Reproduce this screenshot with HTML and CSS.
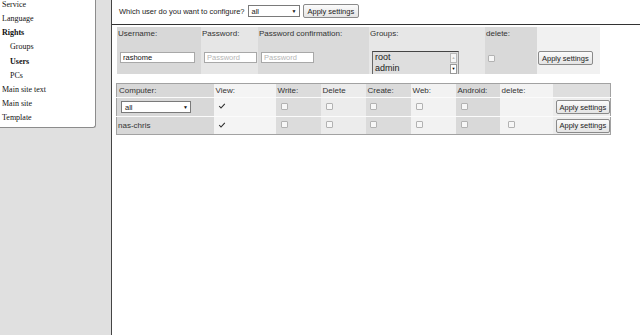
FILE: index.html
```html
<!DOCTYPE html>
<html lang="en">
<head>
    <meta charset="UTF-8">
    <title>Rights - Users</title>
    <link rel="stylesheet" href="styles.css">
</head>
<body>
    <div class="sidebar">
        <ul class="menu">
            <li>Service</li>
            <li>Language</li>
            <li class="bold">Rights</li>
            <li class="sub">Groups</li>
            <li class="sub bold">Users</li>
            <li class="sub">PCs</li>
            <li>Main site text</li>
            <li>Main site</li>
            <li>Template</li>
        </ul>
    </div>
    <div class="main">
        <div class="topbar">
            <span class="question">Which user do you want to configure?</span>
            <div class="select user-select"><span>all</span><span class="arrow">▼</span></div>
            <button>Apply settings</button>
        </div>

        <table class="user-table">
            <tr class="head">
                <td class="c1">Username:</td>
                <td class="c2">Password:</td>
                <td class="c3">Password confirmation:</td>
                <td class="c4">Groups:</td>
                <td class="c5">delete:</td>
                <td class="c6"></td>
            </tr>
            <tr>
                <td class="c1"><input class="field" type="text" value="rashome"></td>
                <td class="c2"><input class="field short" type="text" placeholder="Password"></td>
                <td class="c3"><input class="field short" type="text" placeholder="Password"></td>
                <td class="c4">
                    <div class="listbox">
                        <div class="options">
                            <div>root</div>
                            <div>admin</div>
                        </div>
                        <div class="scroll">
                            <span class="up">▲</span>
                            <span class="down">▼</span>
                        </div>
                    </div>
                </td>
                <td class="c5"><span class="cb"></span></td>
                <td class="c6"><button>Apply settings</button></td>
            </tr>
        </table>

        <table class="pc-table">
            <tr class="head">
                <td class="p1">Computer:</td>
                <td class="p2">View:</td>
                <td class="p3">Write:</td>
                <td class="p4">Delete</td>
                <td class="p5">Create:</td>
                <td class="p6">Web:</td>
                <td class="p7">Android:</td>
                <td class="p8">delete:</td>
                <td class="p9"></td>
            </tr>
            <tr class="row">
                <td class="p1"><div class="select pc-select"><span>all</span><span class="arrow">▼</span></div></td>
                <td class="p2"><span class="cb on"><svg width="8" height="8" viewBox="0 0 8 8"><path d="M1.2 4 L3 6 L6.8 1.8" fill="none" stroke="#2a2a2a" stroke-width="1.1"/></svg></span></td>
                <td class="p3"><span class="cb"></span></td>
                <td class="p4"><span class="cb"></span></td>
                <td class="p5"><span class="cb"></span></td>
                <td class="p6"><span class="cb"></span></td>
                <td class="p7"><span class="cb"></span></td>
                <td class="p8"></td>
                <td class="p9"><button>Apply settings</button></td>
            </tr>
            <tr class="row">
                <td class="p1">nas-chris</td>
                <td class="p2"><span class="cb on"><svg width="8" height="8" viewBox="0 0 8 8"><path d="M1.2 4 L3 6 L6.8 1.8" fill="none" stroke="#2a2a2a" stroke-width="1.1"/></svg></span></td>
                <td class="p3"><span class="cb"></span></td>
                <td class="p4"><span class="cb"></span></td>
                <td class="p5"><span class="cb"></span></td>
                <td class="p6"><span class="cb"></span></td>
                <td class="p7"><span class="cb"></span></td>
                <td class="p8"><span class="cb del"></span></td>
                <td class="p9"><button>Apply settings</button></td>
            </tr>
        </table>
    </div>
</body>
</html>
```

FILE: styles.css
```css
body {
    margin: 0;
    display: flex;
    height: 100vh;
    overflow: hidden;
    font-family: "Liberation Sans", Arial, sans-serif;
    font-size: 8px;
    color: #333;
    background: #fff;
}

/* left menu */
.sidebar {
    width: 111px;
    flex-shrink: 0;
    background: #e0e0e0;
    border-right: 1px solid #444;
}

.menu {
    list-style: none;
    margin: -2px 0 0 0;
    padding: 0 0 2px 0;
    width: 95px;
    background: #fff;
    border-right: 1px solid #8c8c8c;
    border-bottom: 1px solid #8c8c8c;
    border-bottom-right-radius: 3px;
    font-family: "Liberation Serif", "Times New Roman", serif;
    font-size: 8px;
    color: #111;
}

.menu li {
    line-height: 14.15px;
    padding-left: 2px;
}

.menu li.sub {
    padding-left: 10px;
}

.menu li.bold {
    font-weight: bold;
}

/* main area */
.main {
    flex: 1;
}

.topbar {
    height: 20px;
    padding: 4px 0 0 7px;
    border-bottom: 1px solid #333;
    display: flex;
    align-items: flex-start;
}

.question {
    margin-top: 3px;
    font-size: 7.5px;
    color: #222;
}

button {
    height: 14px;
    padding: 0 3px;
    font-family: "Liberation Sans", Arial, sans-serif;
    font-size: 7.5px;
    color: #222;
    border: 1px solid #8a8a8a;
    border-radius: 2px;
    background: linear-gradient(to bottom, #fbfbfb, #e4e4e4);
    white-space: nowrap;
}

.topbar button {
    margin-left: 3px;
    padding: 0 4px;
}

.select {
    display: flex;
    align-items: center;
    justify-content: space-between;
    height: 10px;
    padding: 0 2px 0 3px;
    border: 1px solid #7a7a7a;
    background: #fff;
    font-size: 7.5px;
    color: #222;
}

.select .arrow {
    font-size: 5px;
    color: #111;
}

.user-select {
    width: 45px;
    margin: 1px 0 0 3px;
}

.pc-select {
    width: 63px;
}

/* user table */
table {
    border-collapse: collapse;
}

td {
    box-sizing: border-box;
    padding: 0;
    vertical-align: top;
}

.user-table {
    margin: 2px 0 0 5px;
}

.user-table td {
    height: 23px;
}

.user-table .head td {
    padding: 2px 0 0 1px;
}

.user-table .c1 { width: 84px; background: #d8d8d8; }
.user-table .c2 { width: 57px; background: #e6e6e6; }
.user-table .c3 { width: 111px; background: #dadada; }
.user-table .c4 { width: 116px; background: #e7e7e7; }
.user-table .c5 { width: 52px; background: #d9d9d9; }
.user-table .c6 { width: 63px; background: #f1f1f1; }

.user-table tr:last-child td {
    padding-top: 2px;
}

.user-table tr:last-child .c6 {
    padding-top: 1px;
}

.user-table .c6 button {
    margin: 0 0 0 1px;
}

.field {
    display: block;
    box-sizing: border-box;
    width: 75px;
    height: 11px;
    margin-left: 3px;
    padding: 0 2px;
    border: 1px solid #a8a8a8;
    background: #fff;
    font-family: "Liberation Sans", Arial, sans-serif;
    font-size: 7.5px;
    color: #111;
}

.field.short {
    width: 53px;
}

.field::placeholder {
    color: #b5b5b5;
}

.listbox {
    display: flex;
    width: 85px;
    height: 22px;
    margin: -1px 0 0 3px;
    border-top: 1px solid #444;
    border-left: 1px solid #666;
    border-right: 1px solid #999;
    background: #dedede;
    overflow: hidden;
}

.options {
    flex: 1;
    padding-left: 2px;
    font-size: 9px;
    color: #222;
    line-height: 11px;
}

.scroll {
    width: 7px;
    display: flex;
    flex-direction: column;
    justify-content: space-between;
    margin: 1px 1px 0 0;
}

.scroll span {
    height: 8px;
    border: 1px solid #b8b8b8;
    background: #f6f6f6;
    font-size: 4px;
    line-height: 8px;
    text-align: center;
    color: #bbb;
}

.scroll .down {
    color: #000;
    border-color: #999;
    background: #fff;
}

.cb {
    display: inline-flex;
    align-items: center;
    justify-content: center;
    box-sizing: border-box;
    width: 7px;
    height: 7px;
    border: 1px solid #b2b2b2;
    border-radius: 1px;
    background: #f7f7f7;
}

.cb.on {
    width: 8px;
    height: 8px;
    border: none;
    background: transparent;
}

.user-table .c5 .cb {
    margin: 3px 0 0 3px;
}

/* computer table */
.pc-table {
    margin: 9px 0 0 4px;
    border: 1px solid #a2a2a2;
}

.pc-table .head td {
    height: 14px;
    padding: 2px 0 0 2px;
}

.pc-table .row td {
    border-top: 1px solid #fbfbfb;
    vertical-align: middle;
}

.pc-table .row:nth-child(2) td { height: 19px; }
.pc-table .row:nth-child(3) td { height: 18px; }

.pc-table .p1 { width: 97px; background: #d8d8d8; }
.pc-table .p2 { width: 62px; background: #f4f4f4; }
.pc-table .p3 { width: 45px; background: #dcdcdc; }
.pc-table .p4 { width: 45px; background: #ececec; }
.pc-table .p5 { width: 45px; background: #dbdbdb; }
.pc-table .p6 { width: 45px; background: #f2f2f2; }
.pc-table .p7 { width: 44px; background: #d9d9d9; }
.pc-table .p8 { width: 53px; background: #f3f3f3; }
.pc-table .p9 { width: 56px; background: #dedede; }

.pc-table .row .p9 {
    background: #ececec;
}

.pc-table .row .p1 {
    padding-left: 1px;
}

.pc-table .pc-select {
    margin-left: 3px;
}

.pc-table .row .cb {
    margin-left: 5px;
}

.pc-table .row .p2 .cb,
.pc-table .row .p5 .cb {
    margin-left: 4px;
}

.pc-table .row .cb.del {
    margin-left: 8px;
}

.pc-table .p9 button {
    margin-left: 3px;
}
```
